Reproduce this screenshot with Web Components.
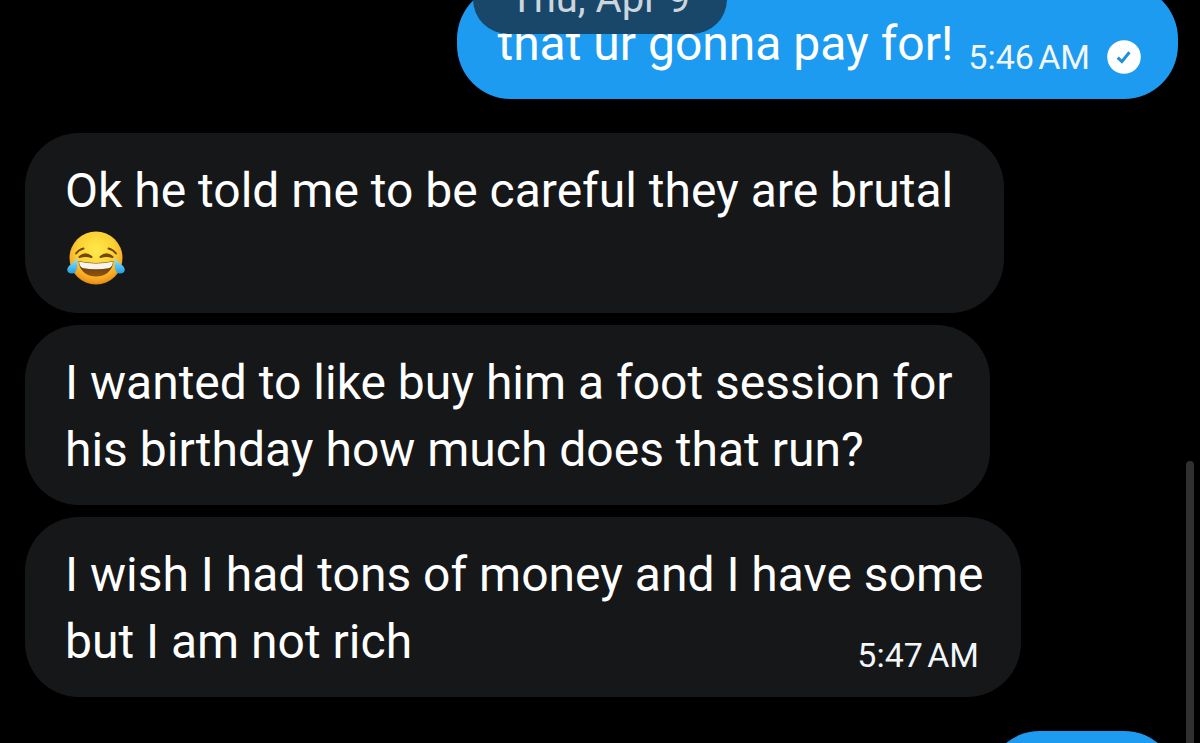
<!DOCTYPE html>
<html lang="en">
<head>
<meta charset="utf-8">
<title>Messages</title>
<style>
  body { margin: 0; background: #000; color: #fff; font-family: Roboto, "Liberation Sans", sans-serif; }
</style>
</head>
<body>
<chat-thread>
  <date-pill slot="date">Thu, Apr 9</date-pill>
  <chat-group side="sent">
    <chat-bubble side="sent">
      that ur gonna pay for!
      <message-meta slot="meta" read>5:46&#8239;AM</message-meta>
    </chat-bubble>
  </chat-group>
  <chat-group>
    <chat-bubble style="--bubble-width: 979px">Ok he told me to be careful they are brutal <joy-emoji></joy-emoji></chat-bubble>
    <chat-bubble style="--bubble-width: 965px">I wanted to like buy him a foot session for his birthday how much does that run?</chat-bubble>
    <chat-bubble style="--bubble-width: 996px">I wish I had tons of money and I have some but I am not rich<message-meta slot="meta">5:47&#8239;AM</message-meta></chat-bubble>
  </chat-group>
  <chat-group side="sent">
    <chat-bubble side="sent" style="--bubble-width: 192px"></chat-bubble>
  </chat-group>
</chat-thread>

<script>
const define = (name, html) => {
  const template = document.createElement('template');
  template.innerHTML = html;
  customElements.define(name, class extends HTMLElement {
    constructor() {
      super();
      this.attachShadow({ mode: 'open' }).append(template.content.cloneNode(true));
    }
  });
};

define('chat-thread', `
  <style>
    :host { display: block; position: relative; height: 100vh; overflow: hidden; background: #000; }
    /* The thread is scrolled slightly past the top of its first message. */
    main { display: flex; flex-direction: column; gap: 34px; margin-top: -15px; padding: 0 22px 0 25px; }
    .date { position: absolute; top: -36px; left: 0; right: 0; display: flex; justify-content: center; }
    .thumb { position: absolute; top: 62%; right: 6px; bottom: -8px; width: 8px; border-radius: 4px; background: #303030; }
  </style>
  <main><slot></slot></main>
  <div class="date"><slot name="date"></slot></div>
  <div class="thumb"></div>`);

define('date-pill', `
  <style>
    :host { display: block; padding: 0 37px; border-radius: 35px; background: #184769; color: #ccd5dc; font-size: 40px; line-height: 70px; white-space: nowrap; }
  </style>
  <slot></slot>`);

define('chat-group', `
  <style>
    :host { display: flex; flex-direction: column; align-items: flex-start; gap: 12px; }
    :host([side="sent"]) { align-items: flex-end; }
  </style>
  <slot></slot>`);

define('chat-bubble', `
  <style>
    :host {
      display: block; position: relative; box-sizing: border-box;
      width: var(--bubble-width, auto); max-width: 88%; min-height: 114px;
      padding: 24px 24px 22px 40px; border-radius: 54px;
      background: #161719; font-size: 48px; line-height: 67px;
    }
    :host([side="sent"]) { display: flex; align-items: flex-end; gap: 15px; background: #1d9bf0; padding-right: 37px; }
    ::slotted(message-meta) { position: absolute; right: 42px; bottom: 24px; }
    :host([side="sent"]) ::slotted(message-meta) { position: static; margin-bottom: 2px; }
  </style>
  <div class="text"><slot></slot></div>
  <slot name="meta"></slot>`);

define('message-meta', `
  <style>
    :host { display: flex; align-items: center; gap: 17px; font-size: 34px; line-height: 36px; color: #f2f6f9; white-space: nowrap; }
    svg { display: none; width: 34px; height: 34px; }
    :host([read]) svg { display: block; }
  </style>
  <time><slot></slot></time>
  <svg viewBox="0 0 34 34" role="img" aria-label="Read">
    <circle cx="17" cy="17" r="16.8" fill="#fff"/>
    <path d="M10.700 17.600l4.200 4 7.500-9.400" fill="none" stroke="#1d8ee0" stroke-width="3"/>
  </svg>`);

define('joy-emoji', `
  <style>
    :host { display: inline-block; width: 62px; height: 56px; vertical-align: -12px; }
    svg { display: block; width: 62px; height: 56px; }
  </style>
  <svg viewBox="0 0 62 56" role="img" aria-label="Face with tears of joy">
    <defs>
      <radialGradient id="face" cx=".5" cy=".36" r=".66">
        <stop offset="0" stop-color="#ffe94e"/><stop offset=".55" stop-color="#fdd032"/>
        <stop offset=".82" stop-color="#f6a823"/><stop offset="1" stop-color="#e38212"/>
      </radialGradient>
      <linearGradient id="mouth" x1="0" y1="0" x2="0" y2="1">
        <stop offset="0" stop-color="#5b3407"/><stop offset="1" stop-color="#8f5412"/>
      </linearGradient>
      <linearGradient id="tear" x1="0" y1="0" x2="0" y2="1">
        <stop offset="0" stop-color="#9be4fb"/><stop offset="1" stop-color="#1d9fe8"/>
      </linearGradient>
    </defs>
    <circle cx="31" cy="28" r="26.5" fill="url(#face)"/>
    <g fill="none" stroke="#744608" stroke-linecap="round" stroke-linejoin="round">
      <path d="M11 23.500Q14 19.500 18.500 18.500M51 23.500Q48 19.500 43.500 18.500" stroke-width="2"/>
      <path d="M14.500 27Q20.500 21.500 26.500 27Q20.500 25 14.500 27M35.500 27Q41.500 21.500 47.500 27Q41.500 25 35.500 27" stroke-width="2"/>
    </g>
    <path d="M13.500 31Q31 35 48.500 31C47.500 41 40.500 46.500 31 46.500S14.500 41 13.500 31Z" fill="url(#mouth)"/>
    <path d="M14 31.500Q31 35.500 48 31.500Q47.500 36.500 44.500 38Q31 40.500 17.500 38Q14.500 36.500 14 31.500Z" fill="#f7f4ed"/>
    <path d="M12.500 28.500C12.500 35.500 12.500 43.500 7 43.500C1.500 43.500 1 38.500 4.500 35.500Z" fill="url(#tear)"/>
    <path d="M49.500 28.500C49.500 35.500 49.500 43.500 55 43.500C60.500 43.500 61 38.500 57.500 35.500Z" fill="url(#tear)"/>
  </svg>`);
</script>
</body>
</html>
